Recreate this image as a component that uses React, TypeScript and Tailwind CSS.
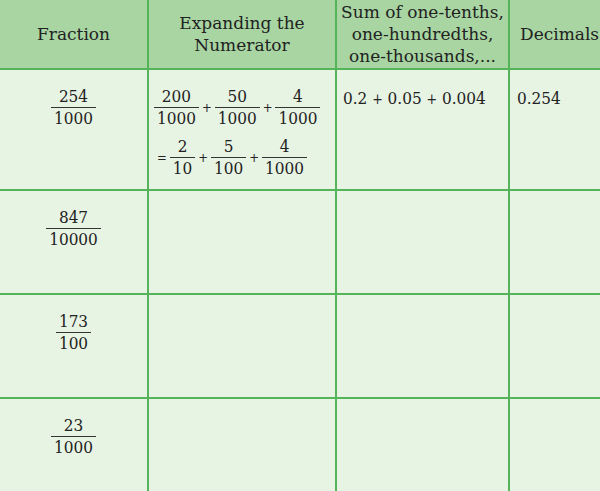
import React from "react";

const serif = { fontFamily: '"DejaVu Serif", "Liberation Serif", serif' };

function Frac({ n, d }: { n: string; d: string }) {
  return (
    <span className="inline-flex flex-col items-center align-middle leading-[21px]">
      <span className="px-[3px]">{n}</span>
      <span className="px-[3px] border-t border-[#333]">{d}</span>
    </span>
  );
}

function Op({ c }: { c: string }) {
  return <span className="mx-[3px] text-[13px] align-middle">{c}</span>;
}

const rows = [
  { n: "847", d: "10000" },
  { n: "173", d: "100" },
  { n: "23", d: "1000" },
];

export default function App() {
  const line = "border-[#55b35a]";
  return (
    <div className="w-[600px] h-[491px] overflow-hidden bg-[#e7f3e3] text-[#222]" style={serif}>
      <table className="border-collapse table-fixed w-[640px] text-[17px] [font-stretch:semi-condensed]">
        <colgroup>
          <col className="w-[148px]" />
          <col className="w-[188px]" />
          <col className="w-[173px]" />
          <col className="w-[131px]" />
        </colgroup>
        <thead>
          <tr className="bg-[#a8d5a2] h-[69px] text-[17px] leading-[22px] [font-stretch:normal]">
            <th className={`font-normal border-r-2 border-b-2 ${line} text-center`}>Fraction</th>
            <th className={`font-normal border-r-2 border-b-2 ${line} text-center`}>
              Expanding the
              <br />
              Numerator
            </th>
            <th className={`font-normal border-r-2 border-b-2 ${line} text-center`}>
              Sum of one-tenths,
              <br />
              one-hundredths,
              <br />
              one-thousands,...
            </th>
            <th className={`font-normal border-b-2 ${line} text-left pl-[10px] align-middle`}>Decimals</th>
          </tr>
        </thead>
        <tbody>
          <tr className="h-[121px]">
            <td className={`border-r-2 border-b-2 ${line} align-top text-center pt-[16px]`}>
              <Frac n="254" d="1000" />
            </td>
            <td className={`border-r-2 border-b-2 ${line} align-top pt-[16px] pl-[5px]`}>
              <div className="flex items-center">
                <Frac n="200" d="1000" />
                <Op c="+" />
                <Frac n="50" d="1000" />
                <Op c="+" />
                <Frac n="4" d="1000" />
              </div>
              <div className="flex items-center mt-[7px]">
                <Op c="=" />
                <Frac n="2" d="10" />
                <Op c="+" />
                <Frac n="5" d="100" />
                <Op c="+" />
                <Frac n="4" d="1000" />
              </div>
            </td>
            <td className={`border-r-2 border-b-2 ${line} align-top pt-[17px] pl-[6px] leading-[22px]`}>
              0.2 <span className="text-[14px]">+</span> 0.05 <span className="text-[14px]">+</span> 0.004
            </td>
            <td className={`border-b-2 ${line} align-top pt-[17px] pl-[7px] leading-[22px]`}>0.254</td>
          </tr>
          {rows.map((r) => (
            <tr key={r.n} className="h-[104px]">
              <td className={`border-r-2 border-b-2 ${line} align-top text-center pt-[16px]`}>
                <Frac n={r.n} d={r.d} />
              </td>
              <td className={`border-r-2 border-b-2 ${line}`} />
              <td className={`border-r-2 border-b-2 ${line}`} />
              <td className={`border-b-2 ${line}`} />
            </tr>
          ))}
        </tbody>
      </table>
    </div>
  );
}
